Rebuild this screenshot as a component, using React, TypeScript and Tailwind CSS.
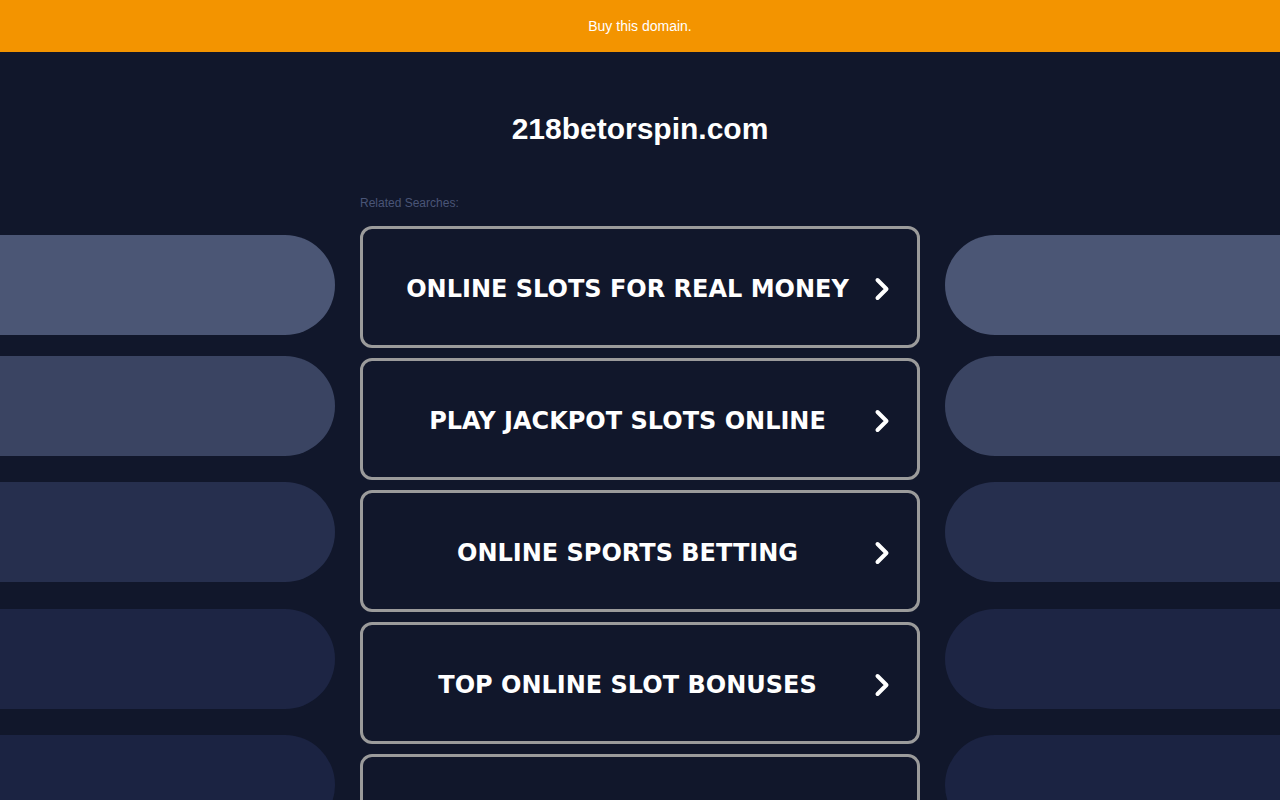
import React from "react";

const searches = [
  "ONLINE SLOTS FOR REAL MONEY",
  "PLAY JACKPOT SLOTS ONLINE",
  "ONLINE SPORTS BETTING",
  "TOP ONLINE SLOT BONUSES",
  "BEST ONLINE CASINO SITES",
];

const pills = [
  { bg: "bg-[#4b5675]", mt: "mt-[183px]" },
  { bg: "bg-[#3a4462]", mt: "mt-[21px]" },
  { bg: "bg-[#262f4e]", mt: "mt-[26px]" },
  { bg: "bg-[#1d2544]", mt: "mt-[27px]" },
  { bg: "bg-[#1b2342]", mt: "mt-[26px]" },
];

const Chevron = () => (
  <svg width="30" height="30" viewBox="0 0 30 30" className="mr-[20px] shrink-0">
    <path
      d="M10.5 6 L19.5 15 L10.5 24"
      fill="none"
      stroke="#ffffff"
      strokeWidth="4"
      strokeLinecap="round"
      strokeLinejoin="round"
    />
  </svg>
);

const App = () => {
  return (
    <div className="min-h-screen bg-[#11172b] overflow-hidden" style={{ height: 800 }}>
      <div className="h-[52px] bg-[#f39400] flex items-center justify-center">
        <span className="text-white text-[14px] font-['Liberation_Sans',Arial,sans-serif]">
          Buy this domain.
        </span>
      </div>

      <div className="flex">
        <div className="w-[335px] shrink-0 flex flex-col">
          {pills.map((p, i) => (
            <div key={i} className={`${p.mt} ${p.bg} h-[100px] rounded-r-[50px]`} />
          ))}
        </div>

        <div className="w-[560px] shrink-0 mx-[25px] flex flex-col">
          <h1 className="pt-[59px] text-center text-white text-[30px] leading-[36px] font-bold font-['Liberation_Sans',Arial,sans-serif]">
            218betorspin.com
          </h1>
          <p className="mt-[48px] text-[12px] leading-[17px] text-[#4a5577] font-['Liberation_Sans',Arial,sans-serif]">
            Related Searches:
          </p>
          <div className="mt-[14px] flex flex-col gap-[10px]">
            {searches.map((s) => (
              <a
                key={s}
                href="#"
                className="h-[122px] border-[3px] border-[#9b9b9b] rounded-[12px] flex items-center pl-[25px] pt-[4px] bg-[#11172b]"
              >
                <span className="flex-1 text-center text-white text-[24px] font-bold font-['DejaVu_Sans',Verdana,sans-serif]">
                  {s}
                </span>
                <Chevron />
              </a>
            ))}
          </div>
        </div>

        <div className="flex-1 flex flex-col">
          {pills.map((p, i) => (
            <div key={i} className={`${p.mt} ${p.bg} h-[100px] rounded-l-[50px]`} />
          ))}
        </div>
      </div>
    </div>
  );
};

export default App;
